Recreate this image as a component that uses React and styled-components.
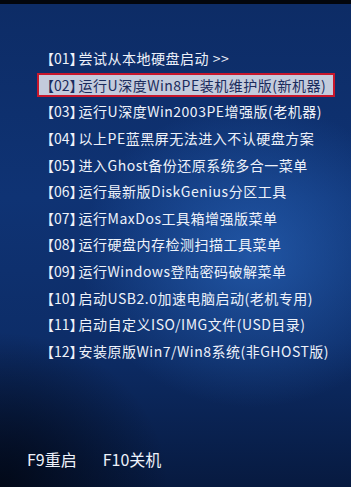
import React from "react";
import styled, { createGlobalStyle } from "styled-components";

const Global = createGlobalStyle`
  html, body { margin: 0; padding: 0; background: #000; }
  #root { width: 351px; height: 487px; overflow: hidden; }
`;

const Screen = styled.div`
  width: 351px;
  height: 487px;
  display: flex;
  flex-direction: column;
  background: #000;
  font-family: "Noto Sans CJK SC", "Noto Sans", sans-serif;
`;

const TopStrip = styled.div`
  height: 4px;
  flex: none;
  background: #03060c;
`;

const Desktop = styled.div`
  flex: 1;
  display: flex;
  flex-direction: column;
  background:
    radial-gradient(ellipse 70% 45% at 72% 52%, rgba(45, 110, 200, 0.6), rgba(45, 110, 200, 0) 70%),
    radial-gradient(ellipse 60% 40% at 0% 100%, rgba(2, 8, 22, 0.95), rgba(2, 8, 22, 0) 80%),
    linear-gradient(180deg, #0d2c66 0%, #0f3374 40%, #0d2d68 70%, #071a40 100%);
`;

const Menu = styled.ul`
  list-style: none;
  margin: 41px 0 0 37px;
  padding: 0;
  width: 298px;
  display: flex;
  flex-direction: column;
`;

const Item = styled.li`
  height: 26.6px;
  display: flex;
  align-items: center;
`;

const Label = styled.div`
  box-sizing: border-box;
  width: 100%;
  height: 24px;
  display: flex;
  align-items: center;
  padding-left: ${(p) => (p.$active ? 8 : 10)}px;
  border: ${(p) => (p.$active ? "2px solid #c8172c" : "none")};
  background: ${(p) => (p.$active ? "#c3cbdc" : "transparent")};
  color: ${(p) => (p.$active ? "#1b2c5c" : "#eef2fa")};
  font-size: 14px;
  white-space: nowrap;
`;

const Tag = styled.span`
  font-feature-settings: "halt";
  margin-right: 2px;
`;

const Text = styled.span`
  letter-spacing: 0.5px;
`;

const Footer = styled.div`
  margin-top: auto;
  padding: 0 0 18px 27px;
  display: flex;
  gap: 26px;
  color: #eef2fa;
  font-size: 16px;
  line-height: 20px;
`;

const items = [
  "尝试从本地硬盘启动 >>",
  "运行U深度Win8PE装机维护版(新机器)",
  "运行U深度Win2003PE增强版(老机器)",
  "以上PE蓝黑屏无法进入不认硬盘方案",
  "进入Ghost备份还原系统多合一菜单",
  "运行最新版DiskGenius分区工具",
  "运行MaxDos工具箱增强版菜单",
  "运行硬盘内存检测扫描工具菜单",
  "运行Windows登陆密码破解菜单",
  "启动USB2.0加速电脑启动(老机专用)",
  "启动自定义ISO/IMG文件(USD目录)",
  "安装原版Win7/Win8系统(非GHOST版)",
];

export default function App() {
  return (
    <>
      <Global />
      <Screen>
        <TopStrip />
        <Desktop>
          <Menu>
            {items.map((t, i) => (
              <Item key={i}>
                <Label $active={i === 1}>
                  <Tag>【{String(i + 1).padStart(2, "0")}】</Tag>
                  <Text>{t}</Text>
                </Label>
              </Item>
            ))}
          </Menu>
          <Footer>
            <span>F9重启</span>
            <span>F10关机</span>
          </Footer>
        </Desktop>
      </Screen>
    </>
  );
}
